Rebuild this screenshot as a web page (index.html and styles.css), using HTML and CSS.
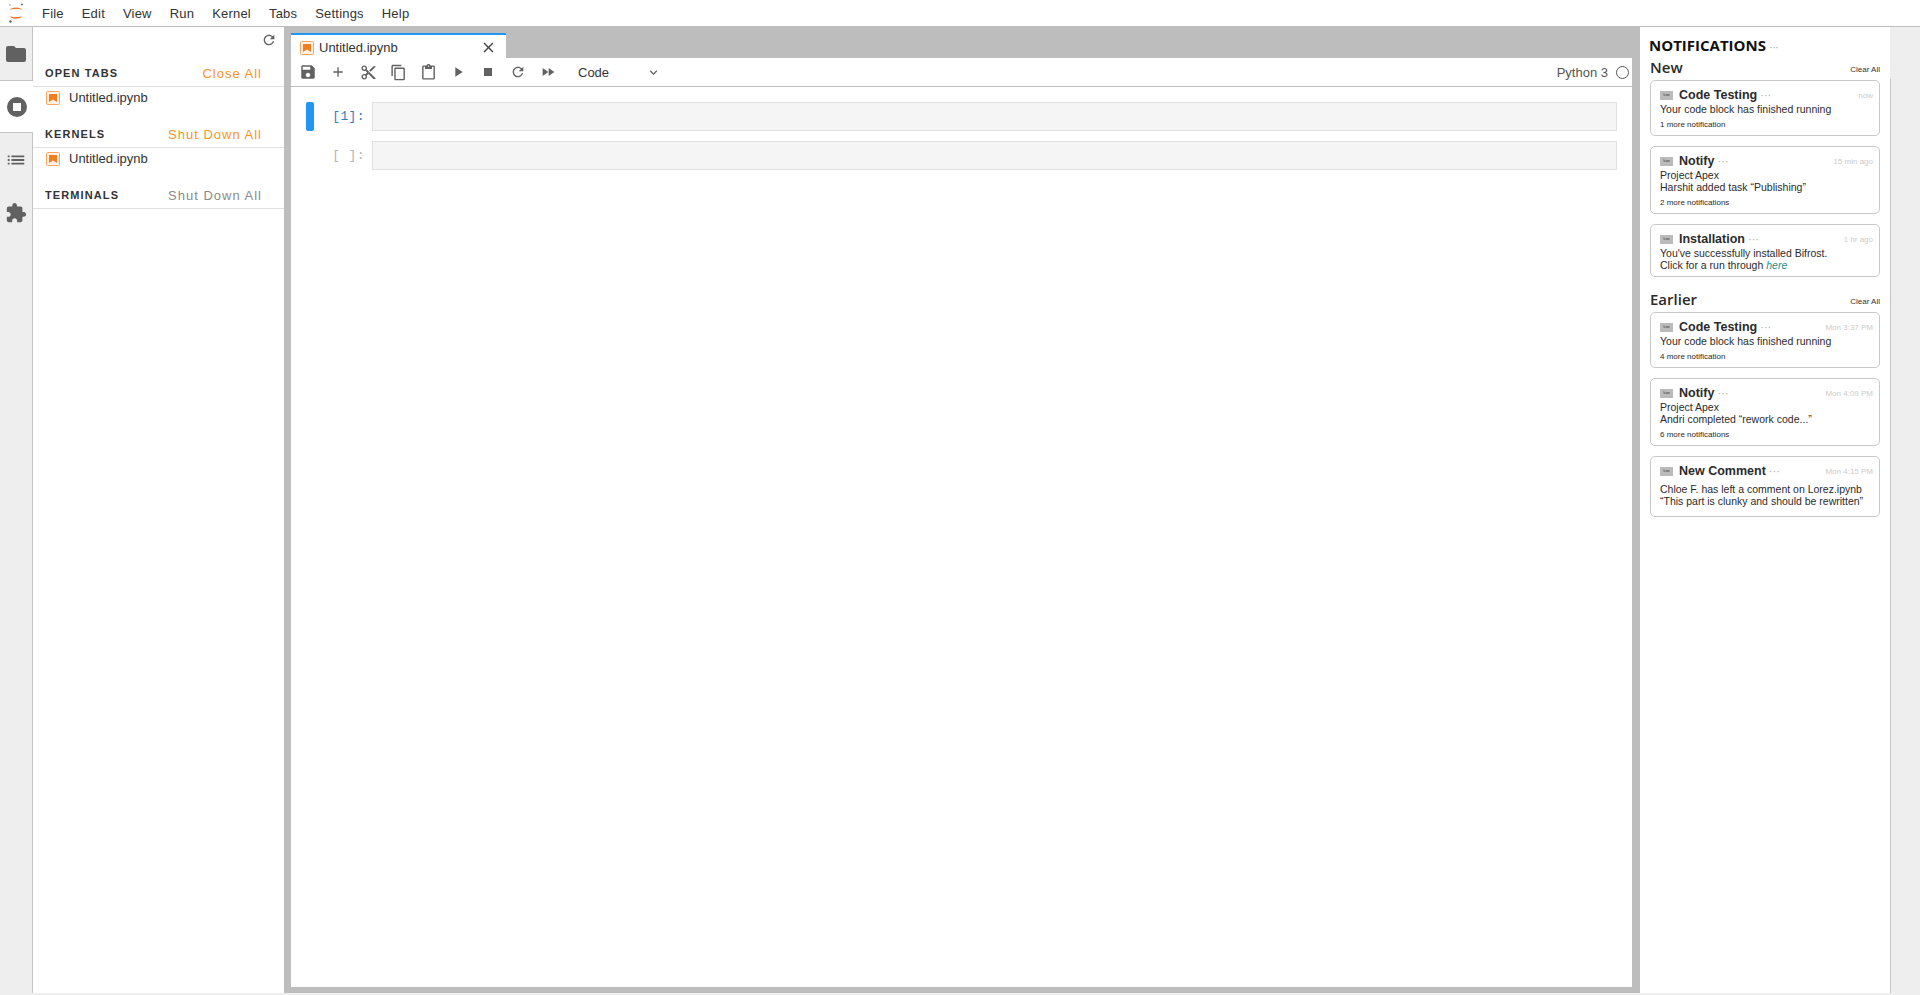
FILE: index.html
```html
<!DOCTYPE html>
<html lang="en">
  <head>
    <meta charset="UTF-8" />
    <title>JupyterLab</title>
    <link rel="stylesheet" href="styles.css">
  </head>
  <body>
    <svg class="defs" width="0" height="0">
      <symbol id="nb" viewBox="0 0 14 14">
        <rect x="0.5" y="0.5" width="13" height="13" rx="1" fill="#fff3e8" stroke="#f8a561"/>
        <path d="M3 3h8v8L7 8.6 3 11z" fill="#f57c1f"/>
      </symbol>
    </svg>
    <div class="app">
      <div class="menubar">
        <svg class="logo" viewBox="0 0 20 24" width="20" height="24">
          <path d="M3.5 9C5 5.6 15 5.6 16.5 9 14 7.6 6 7.6 3.5 9z" fill="#f37726"/>
          <path d="M3.5 15C5 18.4 15 18.4 16.5 15 14 16.4 6 16.4 3.5 15z" fill="#f37726"/>
          <circle cx="16" cy="3.5" r="1.1" fill="#767677"/>
          <circle cx="4" cy="4" r="0.8" fill="#989798"/>
          <circle cx="4.5" cy="20.5" r="1.2" fill="#616262"/>
        </svg>
        <nav class="menu">
          <span>File</span><span>Edit</span><span>View</span><span>Run</span><span>Kernel</span><span>Tabs</span><span>Settings</span><span>Help</span>
        </nav>
      </div>

      <div class="workspace">
        <div class="side-strip">
          <div class="strip-tab">
            <svg viewBox="0 0 24 24" width="24" height="24"><path d="M10 4H4c-1.1 0-1.99.9-1.99 2L2 18c0 1.1.9 2 2 2h16c1.1 0 2-.9 2-2V8c0-1.1-.9-2-2-2h-8l-2-2z"/></svg>
          </div>
          <div class="strip-tab active">
            <svg viewBox="0 0 24 24" width="24" height="24"><path fill-rule="evenodd" d="M12 2a10 10 0 1 0 0 20 10 10 0 0 0 0-20zM8 8h8v8H8z"/></svg>
          </div>
          <div class="strip-tab">
            <svg viewBox="0 0 24 24" width="22" height="22"><path d="M3 13h2v-2H3v2zm0 4h2v-2H3v2zm0-8h2V7H3v2zm4 4h14v-2H7v2zm0 4h14v-2H7v2zM7 7v2h14V7H7z"/></svg>
          </div>
          <div class="strip-tab">
            <svg viewBox="0 0 24 24" width="22" height="22"><path d="M20.5 11H19V7c0-1.1-.9-2-2-2h-4V3.5C13 2.12 11.88 1 10.5 1S8 2.12 8 3.5V5H4c-1.1 0-1.99.9-1.99 2v3.8H3.5c1.49 0 2.7 1.21 2.7 2.7s-1.21 2.7-2.7 2.7H2V20c0 1.1.9 2 2 2h3.8v-1.5c0-1.49 1.21-2.7 2.7-2.7 1.49 0 2.7 1.21 2.7 2.7V22H17c1.1 0 2-.9 2-2v-4h1.5c1.38 0 2.5-1.12 2.5-2.5S21.88 11 20.5 11z"/></svg>
          </div>
        </div>

        <div class="side-panel">
          <div class="panel-tools">
            <svg viewBox="0 0 24 24" width="16" height="16"><path d="M17.65 6.35C16.2 4.9 14.21 4 12 4c-4.42 0-7.99 3.58-7.99 8s3.57 8 7.99 8c3.73 0 6.84-2.55 7.73-6h-2.08c-.82 2.33-3.04 4-5.65 4-3.31 0-6-2.69-6-6s2.69-6 6-6c1.66 0 3.14.69 4.22 1.78L13 11h7V4l-2.35 2.35z"/></svg>
          </div>
          <div class="section-head">
            <span class="section-title">OPEN TABS</span>
            <span class="section-action">Close All</span>
          </div>
          <div class="session-row"><svg width="14" height="14"><use href="#nb"/></svg>Untitled.ipynb</div>
          <div class="section-head">
            <span class="section-title">KERNELS</span>
            <span class="section-action">Shut Down All</span>
          </div>
          <div class="session-row"><svg width="14" height="14"><use href="#nb"/></svg>Untitled.ipynb</div>
          <div class="section-head">
            <span class="section-title">TERMINALS</span>
            <span class="section-action muted">Shut Down All</span>
          </div>
        </div>

        <div class="dock">
          <div class="tabbar">
            <div class="doc-tab">
              <svg width="14" height="14"><use href="#nb"/></svg>
              <span>Untitled.ipynb</span>
              <svg class="tab-close" viewBox="0 0 24 24" width="17" height="17"><path d="M19 6.41L17.59 5 12 10.59 6.41 5 5 6.41 10.59 12 5 17.59 6.41 19 12 13.41 17.59 19 19 17.59 13.41 12z"/></svg>
            </div>
          </div>
          <div class="notebook">
            <div class="toolbar">
              <button><svg viewBox="0 0 24 24" width="18" height="18"><path d="M17 3H5c-1.11 0-2 .9-2 2v14c0 1.1.89 2 2 2h14c1.1 0 2-.9 2-2V7l-4-4zm-5 16c-1.66 0-3-1.34-3-3s1.34-3 3-3 3 1.34 3 3-1.34 3-3 3zm3-10H5V5h10v4z"/></svg></button>
              <button><svg viewBox="0 0 24 24" width="16" height="16"><path d="M19 13h-6v6h-2v-6H5v-2h6V5h2v6h6v2z"/></svg></button>
              <button><svg viewBox="0 0 24 24" width="17" height="17"><path d="M9.64 7.64c.23-.5.36-1.05.36-1.64 0-2.21-1.79-4-4-4S2 3.79 2 6s1.79 4 4 4c.59 0 1.14-.13 1.64-.36L10 12l-2.36 2.36C7.14 14.13 6.59 14 6 14c-2.21 0-4 1.79-4 4s1.79 4 4 4 4-1.79 4-4c0-.59-.13-1.14-.36-1.64L12 14l7 7h3v-1L9.64 7.64zM6 8c-1.1 0-2-.89-2-2s.9-2 2-2 2 .89 2 2-.9 2-2 2zm0 12c-1.1 0-2-.89-2-2s.9-2 2-2 2 .89 2 2-.9 2-2 2zm6-7.5c-.28 0-.5-.22-.5-.5s.22-.5.5-.5.5.22.5.5-.22.5-.5.5zM19 3l-6 6 2 2 7-7V3h-3z"/></svg></button>
              <button><svg viewBox="0 0 24 24" width="17" height="17"><path d="M16 1H4c-1.1 0-2 .9-2 2v14h2V3h12V1zm3 4H8c-1.1 0-2 .9-2 2v14c0 1.1.9 2 2 2h11c1.1 0 2-.9 2-2V7c0-1.1-.9-2-2-2zm0 16H8V7h11v14z"/></svg></button>
              <button><svg viewBox="0 0 24 24" width="17" height="17"><path d="M19 2h-4.18C14.4.84 13.3 0 12 0c-1.3 0-2.4.84-2.82 2H5c-1.1 0-2 .9-2 2v16c0 1.1.9 2 2 2h14c1.1 0 2-.9 2-2V4c0-1.1-.9-2-2-2zm-7 0c.55 0 1 .45 1 1s-.45 1-1 1-1-.45-1-1 .45-1 1-1zm7 18H5V4h2v3h10V4h2v16z"/></svg></button>
              <button><svg viewBox="0 0 24 24" width="16" height="16"><path d="M8 5v14l11-7z"/></svg></button>
              <button><svg viewBox="0 0 24 24" width="16" height="16"><path d="M6 6h12v12H6z"/></svg></button>
              <button><svg viewBox="0 0 24 24" width="16" height="16"><path d="M17.65 6.35C16.2 4.9 14.21 4 12 4c-4.42 0-7.99 3.58-7.99 8s3.57 8 7.99 8c3.73 0 6.84-2.55 7.73-6h-2.08c-.82 2.33-3.04 4-5.65 4-3.31 0-6-2.69-6-6s2.69-6 6-6c1.66 0 3.14.69 4.22 1.78L13 11h7V4l-2.35 2.35z"/></svg></button>
              <button><svg viewBox="0 0 24 24" width="16" height="16"><path d="M4 18l8.5-6L4 6v12zm9-12v12l8.5-6L13 6z"/></svg></button>
              <div class="cell-type">
                <span>Code</span>
                <svg viewBox="0 0 24 24" width="15" height="15"><path d="M7.41 8.59L12 13.17l4.59-4.58L18 10l-6 6-6-6 1.41-1.41z"/></svg>
              </div>
              <div class="kernel">
                <span>Python 3</span>
                <span class="kernel-dot"></span>
              </div>
            </div>
            <div class="cells">
              <div class="cell active">
                <div class="collapser"></div>
                <div class="prompt">[1]:</div>
                <div class="cell-input"></div>
              </div>
              <div class="cell">
                <div class="collapser"></div>
                <div class="prompt">[ ]:</div>
                <div class="cell-input"></div>
              </div>
            </div>
          </div>
        </div>

        <div class="notifications">
          <h1>NOTIFICATIONS <i class="dots">···</i></h1>

          <div class="group-head"><h2>New</h2><span>Clear All</span></div>
          <div class="note-list">
            <div class="note">
              <div class="note-top"><span class="note-icon">Icon</span><b>Code Testing</b><i class="dots">···</i><time>now</time></div>
              <p>Your code block has finished running</p>
              <small>1 more notification</small>
            </div>
            <div class="note">
              <div class="note-top"><span class="note-icon">Icon</span><b>Notify</b><i class="dots">···</i><time>15 min ago</time></div>
              <p>Project Apex<br>Harshit added task “Publishing”</p>
              <small>2 more notifications</small>
            </div>
            <div class="note">
              <div class="note-top"><span class="note-icon">Icon</span><b>Installation</b><i class="dots">···</i><time>1 hr ago</time></div>
              <p>You've successfully installed Bifrost.<br>Click for a run through <a>here</a></p>
            </div>
          </div>

          <div class="group-head"><h2>Earlier</h2><span>Clear All</span></div>
          <div class="note-list">
            <div class="note">
              <div class="note-top"><span class="note-icon">Icon</span><b>Code Testing</b><i class="dots">···</i><time>Mon 3:37 PM</time></div>
              <p>Your code block has finished running</p>
              <small>4 more notification</small>
            </div>
            <div class="note">
              <div class="note-top"><span class="note-icon">Icon</span><b>Notify</b><i class="dots">···</i><time>Mon 4:09 PM</time></div>
              <p>Project Apex<br>Andri completed “rework code...”</p>
              <small>6 more notifications</small>
            </div>
            <div class="note tall">
              <div class="note-top"><span class="note-icon">Icon</span><b>New Comment</b><i class="dots">···</i><time>Mon 4:15 PM</time></div>
              <p>Chloe F. has left a comment on Lorez.ipynb<br>“This part is clunky and should be rewritten”</p>
            </div>
          </div>
        </div>

        <div class="right-strip"></div>
      </div>
    </div>
  </body>
</html>
```

FILE: styles.css
```css
* {
  box-sizing: border-box;
}

body {
  margin: 0;
  background-color: #eee;
  color: #333;
  font-family: "Liberation Sans", Arial, sans-serif;
  overflow: hidden;
}

svg {
  display: block;
  flex: none;
  fill: #616161;
}

.defs {
  position: absolute;
}

.app {
  display: flex;
  flex-direction: column;
  height: 993px;
}

/* top menu */
.menubar {
  display: flex;
  align-items: center;
  height: 27px;
  background-color: #fff;
  border-bottom: 1px solid #bdbdbd;
  padding-left: 6px;
}

.menu {
  display: flex;
  gap: 18px;
  margin-left: 16px;
  font-size: 13px;
  letter-spacing: 0.2px;
}

.workspace {
  flex: 1;
  display: flex;
  min-height: 0;
}

/* left icon strip */
.side-strip {
  width: 33px;
  background-color: #eee;
  border-right: 1px solid #c4c4c4;
}

.strip-tab {
  display: flex;
  align-items: center;
  justify-content: center;
  height: 53px;
}

.strip-tab.active {
  width: 33px;
  background-color: #fff;
  border-top: 1px solid #c4c4c4;
  border-bottom: 1px solid #c4c4c4;
}

/* file panel */
.side-panel {
  width: 251px;
  background-color: #fff;
}

.panel-tools {
  display: flex;
  justify-content: flex-end;
  padding: 5px 7px 0 0;
  height: 33px;
}

.section-head {
  display: flex;
  justify-content: space-between;
  align-items: center;
  height: 27px;
  padding: 0 22px 0 12px;
  border-bottom: 1px solid #e0e0e0;
}

.section-title {
  font-size: 11px;
  font-weight: bold;
  letter-spacing: 1.1px;
}

.section-action {
  font-size: 13px;
  letter-spacing: 1px;
  color: #f7931e;
}

.section-action.muted {
  color: #8a8a8a;
}

.session-row {
  display: flex;
  align-items: center;
  gap: 9px;
  height: 34px;
  padding: 0 0 13px 13px;
  font-size: 13px;
  margin-bottom: 0;
}

/* main dock */
.dock {
  width: 1356px;
  display: flex;
  flex-direction: column;
  background-color: #bdbdbd;
  padding: 6px 8px 6px 7px;
}

.tabbar {
  display: flex;
  height: 25px;
}

.doc-tab {
  display: flex;
  align-items: center;
  width: 215px;
  padding: 2px 9px 0 9px;
  gap: 5px;
  background-color: #fff;
  border-top: 2px solid #2196f3;
  font-size: 13px;
}

.tab-close {
  margin-left: auto;
  fill: #444;
}

.notebook {
  flex: 1;
  background-color: #fff;
}

.toolbar {
  display: flex;
  align-items: center;
  height: 29px;
  padding-left: 2px;
  border-bottom: 1px solid #bdbdbd;
}

.toolbar button {
  display: flex;
  align-items: center;
  justify-content: center;
  width: 30px;
  height: 28px;
  padding: 0;
  border: none;
  background: none;
}

.cell-type {
  display: flex;
  align-items: center;
  justify-content: space-between;
  width: 83px;
  margin-left: 15px;
  font-size: 13px;
}

.kernel {
  display: flex;
  align-items: center;
  gap: 8px;
  margin-left: auto;
  padding-right: 3px;
  font-size: 13px;
  color: #555;
}

.kernel-dot {
  width: 13px;
  height: 13px;
  border: 1.5px solid #555;
  border-radius: 50%;
}

/* cells */
.cells {
  padding: 15px 15px 0 15px;
}

.cell {
  display: flex;
  height: 29px;
  margin-bottom: 10px;
}

.collapser {
  width: 8px;
  border-radius: 2px;
}

.cell.active .collapser {
  background-color: #2196f3;
}

.prompt {
  width: 58px;
  padding-right: 7px;
  text-align: right;
  font-family: "Liberation Mono", monospace;
  font-size: 13px;
  line-height: 29px;
  letter-spacing: 0.4px;
  color: #b5b5b5;
}

.cell.active .prompt {
  color: #307fc1;
}

.cell-input {
  flex: 1;
  background-color: #f5f5f5;
  border: 1px solid #e0e0e0;
}

/* notifications */
.notifications {
  width: 250px;
  background-color: #fff;
  padding: 0 10px 0 10px;
  color: #2b2b2b;
}

.notifications h1 {
  margin: 9px 0 0 -1px;
  height: 18px;
  font-family: "Open Sans", sans-serif;
  font-size: 15px;
  font-weight: 700;
  line-height: 18px;
  color: #111;
}

.dots {
  font-style: normal;
  font-weight: normal;
  font-size: 11px;
  color: #aaa;
}

.group-head {
  display: flex;
  justify-content: space-between;
  align-items: flex-end;
  height: 23px;
  margin-bottom: 3px;
}

.group-head h2 {
  margin: 0;
  font-family: "Open Sans", sans-serif;
  font-size: 15px;
  font-weight: 600;
  line-height: 20px;
}

.group-head span {
  font-size: 8px;
  line-height: 14px;
  color: #333;
}

.note-list {
  display: flex;
  flex-direction: column;
  gap: 10px;
}

.note-list + .group-head {
  margin-top: 9px;
}

.note {
  padding: 6px 6px 5px 9px;
  border: 1.5px solid #c8c8c8;
  border-radius: 5px;
  font-size: 10.5px;
}

.note-top {
  display: flex;
  align-items: center;
  height: 16px;
}

.note-icon {
  width: 13px;
  height: 9px;
  margin-right: 6px;
  background-color: #bbb;
  font-size: 3.5px;
  line-height: 9px;
  text-align: center;
}

.note-top b {
  font-size: 12.5px;
  font-weight: 600;
  margin-right: 3px;
}

.note-top time {
  margin-left: auto;
  font-size: 8px;
  color: #ccc;
}

.note p {
  margin: 0;
  line-height: 12px;
}

.note small {
  display: block;
  margin-top: 4px;
  font-size: 8px;
  line-height: 11px;
}

.note.tall p {
  margin-top: 4px;
  padding-bottom: 4px;
}

.note a {
  font-style: italic;
  color: #1a8f8f;
}

.right-strip {
  flex: 1;
  margin-top: 52px;
  background-color: #eee;
  border-left: 1px solid #c4c4c4;
}
```
